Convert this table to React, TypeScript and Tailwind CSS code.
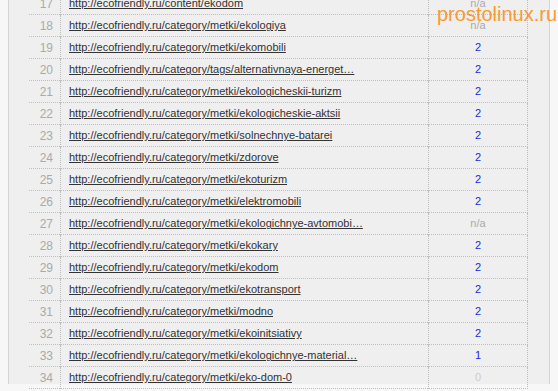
const rows: [number, string, string][] = [
  [17, "http://ecofriendly.ru/content/ekodom", "n/a"],
  [18, "http://ecofriendly.ru/category/metki/ekologiya", "n/a"],
  [19, "http://ecofriendly.ru/category/metki/ekomobili", "2"],
  [20, "http://ecofriendly.ru/category/tags/alternativnaya-energet…", "2"],
  [21, "http://ecofriendly.ru/category/metki/ekologicheskii-turizm", "2"],
  [22, "http://ecofriendly.ru/category/metki/ekologicheskie-aktsii", "2"],
  [23, "http://ecofriendly.ru/category/metki/solnechnye-batarei", "2"],
  [24, "http://ecofriendly.ru/category/metki/zdorove", "2"],
  [25, "http://ecofriendly.ru/category/metki/ekoturizm", "2"],
  [26, "http://ecofriendly.ru/category/metki/elektromobili", "2"],
  [27, "http://ecofriendly.ru/category/metki/ekologichnye-avtomobi…", "n/a"],
  [28, "http://ecofriendly.ru/category/metki/ekokary", "2"],
  [29, "http://ecofriendly.ru/category/metki/ekodom", "2"],
  [30, "http://ecofriendly.ru/category/metki/ekotransport", "2"],
  [31, "http://ecofriendly.ru/category/metki/modno", "2"],
  [32, "http://ecofriendly.ru/category/metki/ekoinitsiativy", "2"],
  [33, "http://ecofriendly.ru/category/metki/ekologichnye-material…", "1"],
  [34, "http://ecofriendly.ru/category/metki/eko-dom-0", "0"],
];

function countClass(v: string) {
  if (v === "n/a") return "text-[#aaaaaa]";
  if (v === "0") return "text-[#cccccc]";
  return "text-[#1f1fe0]";
}

export default function App() {
  return (
    <div className="relative h-[391px] w-[558px] overflow-hidden bg-[#f7f7f7] font-['Liberation_Sans',Arial,sans-serif] text-[11px]">
      <div className="ml-[8px] h-full w-[542px] border-x border-[#d4d4d4] bg-[#efefef]">
        <div className="-mt-[7px] pl-[20px]">
          {rows.map(([n, url, c]) => (
            <div key={n} className="flex h-[22px] items-center">
              <div className="flex h-full w-[31px] items-center justify-end border-b border-dotted border-[#bdbdbd] pr-[7px] text-[12px] text-[#aaaaaa]">
                {n}
              </div>
              <div className="flex h-full w-[368px] items-center border-b border-l border-dotted border-[#bdbdbd] pl-[8px]">
                <a href="#" className="text-[#333333] underline">
                  {url}
                </a>
              </div>
              <div
                className={`flex h-full w-[100px] items-center justify-center border-x border-b border-dotted border-[#bdbdbd] ${countClass(c)}`}
              >
                {c}
              </div>
            </div>
          ))}
        </div>
      </div>
      <div className="absolute left-[437px] top-[4px] text-[20px] leading-none text-[#f7941d] opacity-90">
        prostolinux.ru
      </div>
    </div>
  );
}
